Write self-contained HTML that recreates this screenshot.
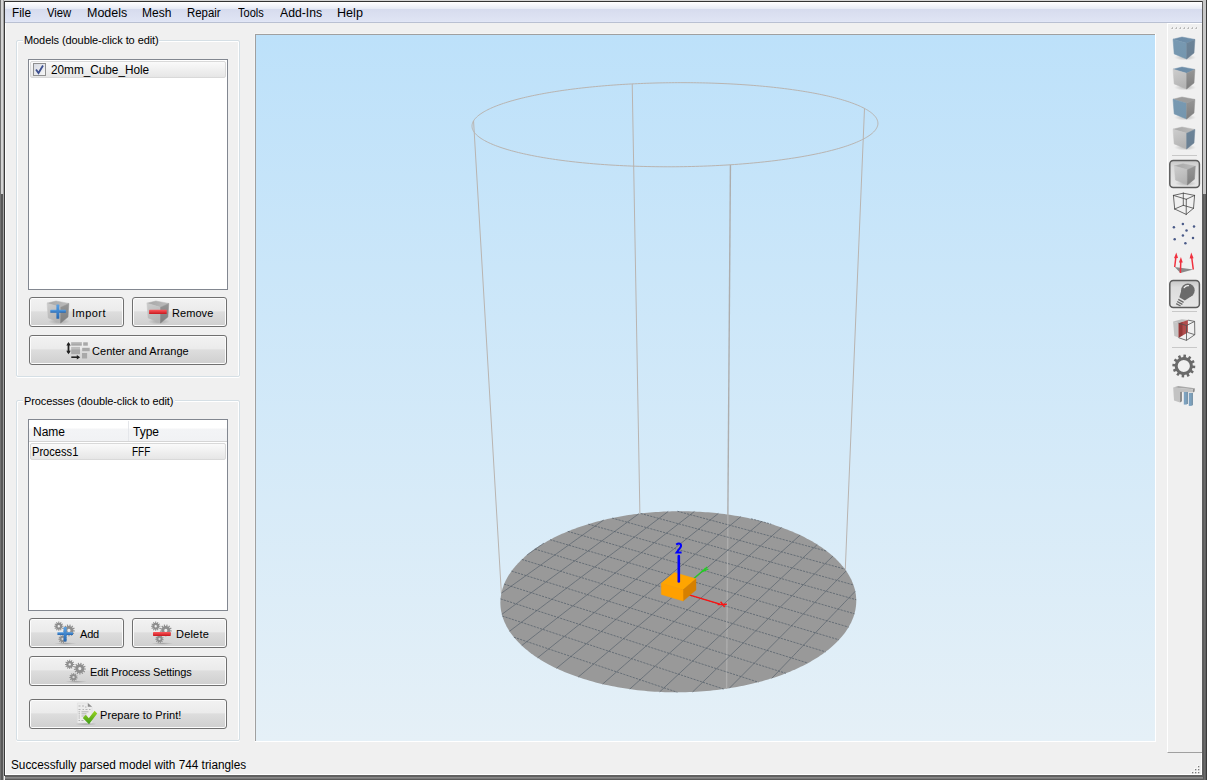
<!DOCTYPE html>
<html><head><meta charset="utf-8">
<style>
*{margin:0;padding:0;box-sizing:border-box}
html,body{width:1207px;height:780px;overflow:hidden;background:#f0f0f0;font-family:"Liberation Sans",sans-serif;font-size:12px;color:#000}
.a{position:absolute}
.t{position:absolute;white-space:nowrap;line-height:14px;transform-origin:0 0}
.menu{left:5px;top:2px;width:1197px;height:21px;background:linear-gradient(#ffffff 0px,#f1f3f9 4px,#e6eaf5 7px,#d5dbee 7px,#d8ddef 9px,#dfe4f4 19px,#e3e8f8 20px);border-bottom:1px solid #b9c0d2}
.grp{border:1px solid #d5dfe5;border-radius:2px;box-shadow:inset 1px 1px 0 #fff, inset -1px 0 0 #fff, 0 1px 0 #fff}
.lst{background:#fff;border:1px solid #828790}
.btn{border:1px solid #707070;border-radius:3px;background:linear-gradient(#f2f2f2 0%,#ebebeb 45%,#dddddd 50%,#cfcfcf 100%);box-shadow:inset 0 0 0 1px #fcfcfc}
.sel{border:1px solid #d9d9d9;border-radius:2px;background:linear-gradient(#fafafa,#e6e6e6)}
.sep{height:1px;background:#c9c9c9}
.tbsel{border:1px solid #5a5a5a;border-radius:4px;background:linear-gradient(#e8e8e8,#d8d8d8)}
</style></head><body>
<!-- window frame -->
<div class="a" style="left:5px;top:23px;width:1px;height:751px;background:#fff"></div>
<div class="a" style="left:5px;top:774px;width:1197px;height:1px;background:#fff"></div>
<div class="a" style="left:1201px;top:23px;width:1px;height:752px;background:#fff"></div>
<div class="a" style="left:0;top:0;width:1207px;height:1px;background:#d4d4d4"></div>
<div class="a" style="left:0;top:1px;width:1207px;height:1px;background:#333"></div>
<div class="a" style="left:0;top:0;width:1px;height:780px;background:#727272"></div>
<div class="a" style="left:1px;top:0;width:2px;height:194px;background:#d4d4d4"></div>
<div class="a" style="left:1px;top:194px;width:2px;height:586px;background:#585858"></div>
<div class="a" style="left:3px;top:0;width:1px;height:780px;background:#a3a3a3"></div>
<div class="a" style="left:4px;top:1px;width:1px;height:775px;background:#3a3a3a"></div>
<div class="a" style="left:1202px;top:1px;width:1px;height:779px;background:#5e5e5e"></div>
<div class="a" style="left:1203px;top:0;width:3px;height:194px;background:#c8c8c8"></div>
<div class="a" style="left:1203px;top:194px;width:1px;height:586px;background:#5c5c5c"></div>
<div class="a" style="left:1204px;top:194px;width:1px;height:586px;background:#6a6a6a"></div>
<div class="a" style="left:1205px;top:194px;width:1px;height:586px;background:#606060"></div>
<div class="a" style="left:1206px;top:0;width:1px;height:780px;background:#3a3a3a"></div>
<div class="a" style="left:5px;top:775px;width:1198px;height:2px;background:#606060"></div>
<div class="a" style="left:5px;top:777px;width:1198px;height:1px;background:#8a8a8a"></div>
<div class="a" style="left:5px;top:778px;width:1198px;height:1px;background:#7a7a7a"></div>
<div class="a" style="left:5px;top:779px;width:1198px;height:1px;background:#5a5a5a"></div>
<!-- menu -->
<div class="a menu"></div>
<div class="t" style="left:12px;top:6px;transform:scaleX(.98)">File</div>
<div class="t" style="left:47px;top:6px;transform:scaleX(.94)">View</div>
<div class="t" style="left:87px;top:6px;transform:scaleX(1.04)">Models</div>
<div class="t" style="left:142px;top:6px">Mesh</div>
<div class="t" style="left:187px;top:6px;transform:scaleX(.95)">Repair</div>
<div class="t" style="left:238px;top:6px;transform:scaleX(.92)">Tools</div>
<div class="t" style="left:280px;top:6px;transform:scaleX(1.02)">Add-Ins</div>
<div class="t" style="left:337px;top:6px;transform:scaleX(1.05)">Help</div>

<!-- Models group -->
<div class="a grp" style="left:16px;top:40px;width:224px;height:337px"></div>
<div class="a" style="left:23px;top:34px;width:136px;height:14px;background:#f0f0f0"></div>
<div class="t" style="left:24px;top:33px;font-size:11px;letter-spacing:-0.08px">Models (double-click to edit)</div>
<div class="a lst" style="left:28px;top:59px;width:200px;height:231px"></div>
<div class="a sel" style="left:30px;top:61px;width:196px;height:17px"></div>
<div class="a" style="left:33px;top:63px;width:13px;height:13px;border:1px solid #8f8f8f;background:linear-gradient(135deg,#d8dbe3,#f6f6f6)"></div>
<svg class="a" style="left:33px;top:63px" width="13" height="13"><path d="M3 6.5 L5.5 10 L10 2.5" stroke="#3d4f8f" stroke-width="1.8" fill="none"/></svg>
<div class="t" style="left:51px;top:63px;transform:scaleX(.981)">20mm_Cube_Hole</div>

<div class="a btn" style="left:29px;top:297px;width:95px;height:30px"></div>
<div class="t" style="left:72px;top:306px;font-size:11px;letter-spacing:0.46px">Import</div>
<div class="a btn" style="left:132px;top:297px;width:95px;height:30px"></div>
<div class="t" style="left:172px;top:306px;font-size:11px;letter-spacing:0.06px">Remove</div>
<div class="a btn" style="left:29px;top:335px;width:198px;height:30px"></div>
<div class="t" style="left:92px;top:344px;font-size:11px;letter-spacing:0.04px">Center and Arrange</div>

<!-- Processes group -->
<div class="a grp" style="left:16px;top:400px;width:224px;height:341px"></div>
<div class="a" style="left:23px;top:394px;width:152px;height:14px;background:#f0f0f0"></div>
<div class="t" style="left:24px;top:394px;font-size:11px;letter-spacing:-0.11px">Processes (double-click to edit)</div>
<div class="a lst" style="left:28px;top:419px;width:200px;height:192px"></div>
<div class="a" style="left:29px;top:420px;width:198px;height:22px;background:linear-gradient(#ffffff 0%,#ffffff 40%,#f3f4f6 41%,#f1f2f4 100%);border-bottom:1px solid #d5d5d5"></div>
<div class="a" style="left:128px;top:421px;width:1px;height:20px;background:#e4e6ea"></div>
<div class="t" style="left:33px;top:425px">Name</div>
<div class="t" style="left:133px;top:425px">Type</div>
<div class="a sel" style="left:30px;top:443px;width:196px;height:17px"></div>
<div class="t" style="left:32px;top:445px;transform:scaleX(.927)">Process1</div>
<div class="t" style="left:132px;top:445px;transform:scaleX(.83)">FFF</div>

<div class="a btn" style="left:29px;top:618px;width:95px;height:30px"></div>
<div class="t" style="left:80px;top:627px;font-size:11px;letter-spacing:-0.2px">Add</div>
<div class="a btn" style="left:132px;top:618px;width:95px;height:30px"></div>
<div class="t" style="left:176px;top:627px;font-size:11px;letter-spacing:0.2px">Delete</div>
<div class="a btn" style="left:29px;top:656px;width:198px;height:30px"></div>
<div class="t" style="left:90px;top:665px;font-size:11px;letter-spacing:-0.14px">Edit Process Settings</div>
<div class="a btn" style="left:29px;top:699px;width:198px;height:30px"></div>
<div class="t" style="left:100px;top:708px;font-size:11px;letter-spacing:0.08px">Prepare to Print!</div>

<!-- status -->
<div class="t" style="left:11px;top:758px;transform:scaleX(.982)">Successfully parsed model with 744 triangles</div>

<!-- viewport -->
<div class="a" style="left:254px;top:33px;width:902px;height:709px;background:#fff;border-left:1px solid #f4f4f4;border-top:1px solid #f4f4f4"></div>
<div class="a" style="left:255px;top:34px;width:900px;height:707px;border-top:1px solid #a0a0a0;border-left:1px solid #a0a0a0;background:#d0e8f8"></div>
<svg class="a" style="left:0;top:0" width="1207" height="780" viewBox="0 0 1207 780"><defs><linearGradient id="bg" x1="0" y1="0" x2="0" y2="1"><stop offset="0" stop-color="#bde1fa"/><stop offset="1" stop-color="#e5f0f7"/></linearGradient></defs>
<rect x="256" y="35" width="899" height="706" fill="url(#bg)"/>
<path d="M473.55 120.90 L501.37 593.15" stroke="#b9b4b0" stroke-width="1" fill="none"/>
<path d="M632.22 83.91 L639.89 513.56" stroke="#b9b4b0" stroke-width="1" fill="none"/>
<path d="M864.50 108.42 L845.28 569.61" stroke="#b9b4b0" stroke-width="1" fill="none"/>
<path d="M855.05 590.35 L854.66 588.79 L854.23 587.24 L853.74 585.70 L853.20 584.17 L852.61 582.65 L851.97 581.13 L851.28 579.62 L850.54 578.13 L849.76 576.64 L848.92 575.16 L848.04 573.69 L847.11 572.24 L846.13 570.79 L845.11 569.36 L844.04 567.94 L842.92 566.53 L841.76 565.13 L840.56 563.75 L839.32 562.38 L838.03 561.02 L836.70 559.68 L835.32 558.35 L833.91 557.03 L832.46 555.73 L830.96 554.45 L829.43 553.17 L827.86 551.92 L826.25 550.68 L824.60 549.46 L822.91 548.25 L821.19 547.06 L819.44 545.88 L817.65 544.73 L815.82 543.58 L813.96 542.46 L812.07 541.36 L810.14 540.27 L808.19 539.20 L806.20 538.14 L804.18 537.11 L802.13 536.09 L800.05 535.10 L797.94 534.12 L795.81 533.16 L793.65 532.22 L791.46 531.29 L789.24 530.39 L787.00 529.51 L784.73 528.64 L782.44 527.80 L780.12 526.98 L777.78 526.17 L775.42 525.39 L773.04 524.62 L770.63 523.88 L768.21 523.16 L765.76 522.45 L763.29 521.77 L760.81 521.11 L758.31 520.47 L755.79 519.85 L753.25 519.25 L750.69 518.67 L748.12 518.12 L745.54 517.58 L742.94 517.07 L740.32 516.57 L737.70 516.10 L735.06 515.65 L732.40 515.22 L729.74 514.82 L727.06 514.43 L724.38 514.07 L721.68 513.72 L718.97 513.40 L716.26 513.11 L713.54 512.83 L710.81 512.57 L708.07 512.34 L705.33 512.13 L702.58 511.94 L699.82 511.77 L697.07 511.63 L694.30 511.50 L691.54 511.40 L688.77 511.32 L686.00 511.26 L683.23 511.23 L680.45 511.22 L677.68 511.22 L674.90 511.25 L672.13 511.31 L669.36 511.38 L666.59 511.48 L663.82 511.60 L661.06 511.74 L658.30 511.90 L655.54 512.08 L652.79 512.29 L650.04 512.52 L647.30 512.77 L644.57 513.04 L641.84 513.33 L639.13 513.65 L636.42 513.98 L633.72 514.34 L631.02 514.72 L628.34 515.12 L625.67 515.55 L623.02 515.99 L620.37 516.46 L617.73 516.95 L615.11 517.45 L612.51 517.98 L609.91 518.53 L607.34 519.11 L604.77 519.70 L602.23 520.31 L599.70 520.95 L597.19 521.60 L594.69 522.28 L592.22 522.97 L589.76 523.69 L587.33 524.43 L584.91 525.19 L582.52 525.96 L580.14 526.76 L577.79 527.58 L575.47 528.41 L573.16 529.27 L570.88 530.15 L568.63 531.04 L566.40 531.96 L564.19 532.89 L562.02 533.84 L559.87 534.82 L557.75 535.81 L555.65 536.81 L553.59 537.84 L551.55 538.89 L549.55 539.95 L547.58 541.03 L545.63 542.13 L543.72 543.24 L541.85 544.38 L540.00 545.52 L538.19 546.69 L536.42 547.87 L534.68 549.07 L532.98 550.29 L531.31 551.52 L529.68 552.77 L528.09 554.03 L526.53 555.31 L525.02 556.60 L523.54 557.90 L522.11 559.22 L520.71 560.56 L519.36 561.91 L518.05 563.27 L516.78 564.65 L515.55 566.03 L514.37 567.43 L513.23 568.85 L512.13 570.27 L511.08 571.71 L510.08 573.16 L509.12 574.62 L508.21 576.08 L507.35 577.56 L506.54 579.05 L505.77 580.55 L505.05 582.06 L504.38 583.58 L503.77 585.10 L503.20 586.63 L502.68 588.17 L502.22 589.72 L501.80 591.27 L501.44 592.83 L501.13 594.40 L500.87 595.97 L500.67 597.54 L500.52 599.12 L500.43 600.71 L500.38 602.30 L500.40 603.89 L500.47 605.48 L500.59 607.07 L500.77 608.67 L501.01 610.27 L501.30 611.87 L501.65 613.46 L502.05 615.06 L502.51 616.66 L503.03 618.25 L503.61 619.84 L504.24 621.43 L504.93 623.02 L505.68 624.60 L506.49 626.18 L507.35 627.75 L508.28 629.32 L509.25 630.88 L510.29 632.44 L511.39 633.99 L512.54 635.52 L513.75 637.06 L515.02 638.58 L516.34 640.09 L517.72 641.59 L519.16 643.08 L520.66 644.56 L522.21 646.03 L523.82 647.49 L525.48 648.93 L527.20 650.36 L528.98 651.77 L530.81 653.17 L532.69 654.55 L534.63 655.92 L536.62 657.27 L538.67 658.60 L540.76 659.92 L542.91 661.22 L545.11 662.49 L547.36 663.75 L549.67 664.99 L552.02 666.20 L554.42 667.40 L556.86 668.57 L559.36 669.72 L561.90 670.85 L564.48 671.95 L567.12 673.03 L569.79 674.09 L572.51 675.12 L575.27 676.12 L578.07 677.10 L580.91 678.05 L583.79 678.97 L586.71 679.87 L589.67 680.74 L592.66 681.58 L595.68 682.39 L598.74 683.17 L601.83 683.92 L604.96 684.64 L608.11 685.33 L611.29 685.99 L614.50 686.62 L617.74 687.22 L621.00 687.78 L624.28 688.32 L627.59 688.82 L630.92 689.29 L634.27 689.72 L637.63 690.13 L641.02 690.49 L644.42 690.83 L647.83 691.13 L651.26 691.40 L654.69 691.63 L658.14 691.83 L661.60 692.00 L665.06 692.13 L668.53 692.23 L672.00 692.29 L675.47 692.31 L678.95 692.31 L682.43 692.27 L685.90 692.19 L689.37 692.08 L692.84 691.93 L696.30 691.75 L699.75 691.54 L703.20 691.29 L706.63 691.01 L710.05 690.69 L713.46 690.34 L716.86 689.96 L720.23 689.54 L723.59 689.09 L726.94 688.61 L730.26 688.10 L733.56 687.55 L736.83 686.97 L740.09 686.36 L743.31 685.71 L746.52 685.04 L749.69 684.34 L752.83 683.60 L755.94 682.83 L759.02 682.04 L762.07 681.22 L765.09 680.36 L768.07 679.48 L771.01 678.57 L773.91 677.63 L776.78 676.67 L779.61 675.68 L782.40 674.66 L785.14 673.62 L787.84 672.55 L790.50 671.46 L793.12 670.34 L795.69 669.20 L798.22 668.04 L800.69 666.86 L803.12 665.65 L805.51 664.42 L807.84 663.17 L810.12 661.90 L812.36 660.61 L814.54 659.31 L816.67 657.98 L818.75 656.63 L820.77 655.27 L822.75 653.90 L824.67 652.50 L826.53 651.09 L828.34 649.67 L830.09 648.23 L831.79 646.78 L833.44 645.31 L835.03 643.83 L836.56 642.34 L838.03 640.84 L839.45 639.33 L840.81 637.81 L842.11 636.28 L843.36 634.74 L844.55 633.19 L845.68 631.63 L846.75 630.07 L847.77 628.50 L848.72 626.93 L849.62 625.35 L850.47 623.76 L851.25 622.17 L851.98 620.58 L852.65 618.98 L853.26 617.39 L853.81 615.78 L854.31 614.18 L854.75 612.58 L855.13 610.98 L855.46 609.38 L855.72 607.77 L855.94 606.17 L856.10 604.57 L856.20 602.98 L856.24 601.38 L856.24 599.79 L856.17 598.21 L856.05 596.62 L855.88 595.05 L855.66 593.47 L855.38 591.91 Z" fill="#999999"/>
<path d="M730.44 164.78 L726.59 688.66" stroke="#adadad" stroke-width="1.4" fill="none"/>
<path d="M526.84 555.05 L527.44 554.63 L528.05 554.21 L528.65 553.79 L529.25 553.37 L529.84 552.95 L530.44 552.54 L531.04 552.12 L531.64 551.70 L532.23 551.29 L532.83 550.87 L533.42 550.46 L534.02 550.04 L534.61 549.63 L535.21 549.21 L535.80 548.80 L536.39 548.39 L536.98 547.98 L537.57 547.56 L538.16 547.15 L538.75 546.74 L539.34 546.33 L539.93 545.92 L540.52 545.51 L541.10 545.10 L541.69 544.69 L542.27 544.29 L542.86 543.88 L543.44 543.47 L544.03 543.06 M501.36 593.21 L505.23 590.44 L509.08 587.69 L512.90 584.95 L516.69 582.24 L520.46 579.54 L524.20 576.87 L527.91 574.21 L531.60 571.57 L535.27 568.94 L538.91 566.34 L542.53 563.75 L546.12 561.18 L549.69 558.62 L553.24 556.09 L556.76 553.57 L560.26 551.06 L563.74 548.57 L567.19 546.10 L570.62 543.65 L574.03 541.21 L577.42 538.78 L580.79 536.38 L584.13 533.98 L587.45 531.61 L590.76 529.24 L594.04 526.90 L597.30 524.56 L600.54 522.25 L603.75 519.94 M501.86 614.33 L507.22 610.40 L512.52 606.50 L517.77 602.64 L522.98 598.82 L528.14 595.03 L533.24 591.28 L538.30 587.56 L543.32 583.87 L548.29 580.22 L553.21 576.61 L558.09 573.02 L562.92 569.47 L567.71 565.95 L572.46 562.47 L577.16 559.01 L581.82 555.59 L586.44 552.19 L591.03 548.83 L595.57 545.49 L600.07 542.18 L604.53 538.91 L608.95 535.66 L613.33 532.44 L617.68 529.24 L621.99 526.08 L626.26 522.94 L630.50 519.83 L634.70 516.74 L638.87 513.68 M509.49 631.25 L515.84 626.45 L522.11 621.72 L528.32 617.04 L534.45 612.41 L540.52 607.83 L546.51 603.30 L552.45 598.82 L558.32 594.39 L564.12 590.01 L569.86 585.68 L575.54 581.39 L581.16 577.15 L586.72 572.95 L592.22 568.80 L597.66 564.69 L603.04 560.63 L608.37 556.60 L613.64 552.62 L618.86 548.69 L624.03 544.79 L629.14 540.93 L634.20 537.11 L639.21 533.33 L644.17 529.58 L649.08 525.88 L653.94 522.21 L658.75 518.58 L663.52 514.98 L668.23 511.42 M521.71 645.57 L528.73 640.12 L535.65 634.74 L542.50 629.43 L549.25 624.19 L555.92 619.01 L562.51 613.90 L569.02 608.84 L575.45 603.85 L581.80 598.92 L588.08 594.05 L594.27 589.24 L600.40 584.49 L606.45 579.79 L612.44 575.14 L618.35 570.55 L624.19 566.02 L629.97 561.54 L635.68 557.10 L641.33 552.72 L646.91 548.39 L652.42 544.11 L657.88 539.87 L663.27 535.68 L668.61 531.54 L673.89 527.45 L679.10 523.40 L684.27 519.39 L689.37 515.43 L694.42 511.51 M537.52 657.87 L544.95 651.93 L552.29 646.07 L559.52 640.29 L566.66 634.59 L573.70 628.97 L580.65 623.42 L587.50 617.94 L594.27 612.53 L600.95 607.20 L607.54 601.93 L614.05 596.73 L620.48 591.60 L626.83 586.53 L633.09 581.52 L639.28 576.58 L645.39 571.70 L651.42 566.88 L657.39 562.12 L663.27 557.41 L669.09 552.77 L674.84 548.18 L680.52 543.64 L686.13 539.16 L691.67 534.73 L697.15 530.35 L702.57 526.02 L707.92 521.75 L713.21 517.52 L718.44 513.34 M556.43 668.37 L564.06 662.09 L571.58 655.90 L579.00 649.80 L586.31 643.78 L593.52 637.85 L600.63 632.00 L607.64 626.23 L614.56 620.54 L621.38 614.92 L628.12 609.38 L634.76 603.92 L641.32 598.53 L647.78 593.20 L654.17 587.95 L660.47 582.77 L666.69 577.65 L672.83 572.60 L678.89 567.61 L684.88 562.68 L690.79 557.82 L696.62 553.02 L702.39 548.28 L708.08 543.59 L713.70 538.97 L719.26 534.40 L724.74 529.88 L730.16 525.42 L735.52 521.02 L740.81 516.66 M578.17 677.13 L585.79 670.66 L593.31 664.29 L600.71 658.01 L608.01 651.82 L615.21 645.71 L622.31 639.69 L629.30 633.76 L636.20 627.91 L643.01 622.14 L649.72 616.44 L656.34 610.83 L662.87 605.29 L669.31 599.82 L675.67 594.43 L681.94 589.11 L688.13 583.86 L694.24 578.67 L700.27 573.56 L706.23 568.51 L712.10 563.52 L717.91 558.60 L723.64 553.74 L729.29 548.94 L734.88 544.20 L740.40 539.52 L745.85 534.90 L751.23 530.34 L756.55 525.83 L761.80 521.37 M602.62 684.10 L610.04 677.60 L617.36 671.20 L624.57 664.88 L631.68 658.66 L638.69 652.52 L645.60 646.47 L652.42 640.51 L659.14 634.62 L665.77 628.82 L672.31 623.10 L678.76 617.45 L685.12 611.88 L691.40 606.38 L697.60 600.96 L703.71 595.61 L709.74 590.33 L715.70 585.12 L721.57 579.97 L727.38 574.89 L733.10 569.88 L738.76 564.93 L744.34 560.04 L749.86 555.21 L755.30 550.45 L760.68 545.74 L765.99 541.09 L771.24 536.50 L776.42 531.96 L781.54 527.48 M629.74 689.13 L636.78 682.76 L643.72 676.49 L650.56 670.30 L657.30 664.20 L663.96 658.19 L670.52 652.25 L676.99 646.40 L683.38 640.62 L689.68 634.93 L695.90 629.30 L702.03 623.76 L708.08 618.28 L714.06 612.88 L719.96 607.55 L725.78 602.28 L731.53 597.08 L737.20 591.95 L742.80 586.89 L748.34 581.88 L753.80 576.94 L759.20 572.06 L764.53 567.24 L769.79 562.48 L774.99 557.78 L780.13 553.14 L785.20 548.55 L790.22 544.01 L795.17 539.53 L800.07 535.10 M659.65 691.91 L666.10 685.87 L672.47 679.92 L678.75 674.04 L684.95 668.24 L691.07 662.52 L697.11 656.87 L703.08 651.29 L708.97 645.79 L714.78 640.35 L720.52 634.98 L726.18 629.68 L731.78 624.45 L737.31 619.28 L742.77 614.17 L748.16 609.13 L753.49 604.15 L758.75 599.23 L763.95 594.36 L769.09 589.56 L774.16 584.81 L779.18 580.12 L784.14 575.48 L789.04 570.90 L793.88 566.37 L798.67 561.90 L803.40 557.47 L808.08 553.10 L812.71 548.77 L817.28 544.49 M692.61 691.94 L698.27 686.46 L703.86 681.05 L709.38 675.70 L714.84 670.42 L720.24 665.19 L725.57 660.03 L730.83 654.93 L736.04 649.89 L741.19 644.91 L746.27 639.98 L751.30 635.11 L756.27 630.30 L761.19 625.54 L766.05 620.83 L770.85 616.18 L775.60 611.58 L780.30 607.03 L784.95 602.53 L789.55 598.08 L794.09 593.68 L798.59 589.32 L803.04 585.01 L807.44 580.75 L811.79 576.54 L816.10 572.37 L820.37 568.24 L824.58 564.15 L828.76 560.11 L832.89 556.11 M729.31 688.25 L733.92 683.62 L738.49 679.03 L743.01 674.50 L747.48 670.01 L751.91 665.56 L756.29 661.16 L760.63 656.81 L764.92 652.50 L769.18 648.23 L773.39 644.00 L777.56 639.81 L781.69 635.67 L785.78 631.56 L789.83 627.49 L793.84 623.47 L797.81 619.48 L801.75 615.53 L805.65 611.62 L809.51 607.74 L813.33 603.90 L817.12 600.10 L820.87 596.33 L824.59 592.60 L828.28 588.90 L831.93 585.23 L835.55 581.60 L839.13 578.00 L842.68 574.44 L846.20 570.90 M771.71 678.35 L774.89 675.03 L778.05 671.74 L781.18 668.48 L784.29 665.23 L787.38 662.01 L790.45 658.82 L793.49 655.65 L796.51 652.50 L799.51 649.37 L802.49 646.27 L805.45 643.19 L808.38 640.13 L811.30 637.09 L814.19 634.07 L817.06 631.08 L819.92 628.11 L822.75 625.15 L825.56 622.22 L828.36 619.31 L831.13 616.42 L833.89 613.55 L836.62 610.70 L839.34 607.87 L842.04 605.06 L844.71 602.26 L847.38 599.49 L850.02 596.73 L852.64 594.00 L855.25 591.28" stroke="#56606b" stroke-width="0.8" fill="none" stroke-opacity="0.85"/>
<path d="M513.87 637.21 L519.17 638.99 L524.49 640.79 L529.83 642.59 L535.19 644.39 L540.58 646.21 L545.99 648.04 L551.43 649.87 L556.88 651.71 L562.37 653.56 L567.87 655.41 L573.41 657.28 L578.96 659.15 L584.54 661.03 L590.15 662.92 L595.78 664.82 L601.44 666.73 L607.12 668.64 L612.83 670.57 L618.56 672.50 L624.32 674.44 L630.10 676.39 L635.92 678.35 L641.75 680.32 L647.62 682.29 L653.51 684.28 L659.43 686.27 L665.37 688.28 L671.35 690.29 L677.35 692.32 M502.33 616.04 L509.34 618.35 L516.40 620.68 L523.50 623.02 L530.64 625.38 L537.82 627.75 L545.04 630.13 L552.30 632.53 L559.61 634.94 L566.96 637.37 L574.36 639.81 L581.80 642.26 L589.28 644.73 L596.81 647.21 L604.38 649.71 L612.00 652.23 L619.66 654.76 L627.37 657.30 L635.13 659.86 L642.94 662.44 L650.79 665.03 L658.69 667.64 L666.64 670.26 L674.64 672.90 L682.69 675.55 L690.78 678.23 L698.93 680.91 L707.13 683.62 L715.38 686.34 L723.68 689.08 M500.54 598.88 L508.60 601.49 L516.72 604.11 L524.89 606.75 L533.12 609.41 L541.40 612.09 L549.74 614.78 L558.14 617.50 L566.59 620.23 L575.10 622.98 L583.67 625.75 L592.29 628.53 L600.98 631.34 L609.73 634.17 L618.53 637.01 L627.40 639.88 L636.33 642.77 L645.33 645.67 L654.38 648.60 L663.50 651.55 L672.69 654.51 L681.94 657.50 L691.26 660.51 L700.64 663.55 L710.09 666.60 L719.61 669.68 L729.20 672.78 L738.86 675.90 L748.59 679.04 L758.39 682.21 M504.16 584.12 L512.90 586.89 L521.70 589.67 L530.56 592.48 L539.49 595.31 L548.48 598.15 L557.54 601.02 L566.67 603.91 L575.86 606.82 L585.13 609.75 L594.46 612.71 L603.86 615.68 L613.33 618.68 L622.87 621.70 L632.48 624.75 L642.17 627.81 L651.93 630.90 L661.76 634.02 L671.67 637.15 L681.66 640.32 L691.72 643.50 L701.86 646.71 L712.08 649.95 L722.38 653.21 L732.76 656.50 L743.22 659.81 L753.77 663.15 L764.40 666.51 L775.11 669.90 L785.91 673.32 M511.53 571.09 L520.68 573.93 L529.89 576.79 L539.18 579.68 L548.54 582.58 L557.97 585.50 L567.47 588.45 L577.04 591.42 L586.69 594.42 L596.42 597.44 L606.21 600.48 L616.09 603.54 L626.04 606.63 L636.07 609.74 L646.18 612.88 L656.37 616.04 L666.64 619.23 L676.99 622.44 L687.43 625.68 L697.95 628.94 L708.55 632.23 L719.24 635.55 L730.02 638.89 L740.88 642.26 L751.84 645.66 L762.89 649.09 L774.02 652.55 L785.25 656.03 L796.57 659.55 L807.99 663.09 M521.85 559.46 L531.20 562.31 L540.63 565.18 L550.12 568.06 L559.69 570.98 L569.34 573.91 L579.06 576.87 L588.85 579.85 L598.72 582.85 L608.67 585.88 L618.70 588.93 L628.81 592.00 L638.99 595.10 L649.26 598.23 L659.62 601.38 L670.05 604.55 L680.57 607.75 L691.18 610.98 L701.87 614.23 L712.65 617.51 L723.52 620.82 L734.48 624.15 L745.53 627.52 L756.67 630.91 L767.91 634.33 L779.24 637.77 L790.66 641.25 L802.19 644.75 L813.81 648.29 L825.53 651.86 M534.74 549.03 L544.11 551.83 L553.56 554.65 L563.07 557.49 L572.66 560.35 L582.33 563.23 L592.07 566.14 L601.88 569.07 L611.78 572.02 L621.75 574.99 L631.80 577.99 L641.92 581.02 L652.13 584.06 L662.42 587.13 L672.79 590.23 L683.25 593.35 L693.79 596.49 L704.42 599.66 L715.13 602.86 L725.93 606.08 L736.82 609.33 L747.80 612.61 L758.87 615.91 L770.03 619.24 L781.28 622.60 L792.63 625.99 L804.08 629.40 L815.62 632.85 L827.26 636.32 L838.99 639.82 M550.04 539.68 L559.26 542.38 L568.55 545.11 L577.91 547.85 L587.35 550.61 L596.85 553.39 L606.42 556.19 L616.07 559.02 L625.79 561.86 L635.59 564.73 L645.46 567.62 L655.41 570.54 L665.43 573.47 L675.54 576.43 L685.72 579.41 L695.98 582.42 L706.33 585.44 L716.75 588.50 L727.26 591.57 L737.85 594.68 L748.53 597.80 L759.29 600.95 L770.14 604.13 L781.08 607.33 L792.11 610.56 L803.22 613.82 L814.43 617.10 L825.73 620.41 L837.13 623.74 L848.62 627.11 M567.80 531.38 L576.70 533.94 L585.66 536.51 L594.68 539.10 L603.77 541.72 L612.93 544.35 L622.15 547.00 L631.44 549.67 L640.80 552.36 L650.22 555.07 L659.72 557.79 L669.28 560.54 L678.92 563.31 L688.63 566.10 L698.41 568.91 L708.27 571.75 L718.19 574.60 L728.20 577.47 L738.28 580.37 L748.44 583.29 L758.67 586.23 L768.98 589.20 L779.38 592.18 L789.85 595.19 L800.40 598.23 L811.04 601.28 L821.76 604.36 L832.57 607.47 L843.45 610.60 L854.43 613.75 M588.29 524.13 L596.67 526.50 L605.10 528.88 L613.59 531.27 L622.14 533.68 L630.74 536.11 L639.41 538.56 L648.13 541.02 L656.91 543.50 L665.75 545.99 L674.66 548.50 L683.62 551.03 L692.65 553.58 L701.73 556.14 L710.89 558.73 L720.10 561.33 L729.38 563.94 L738.73 566.58 L748.14 569.24 L757.62 571.91 L767.16 574.61 L776.78 577.32 L786.46 580.05 L796.21 582.80 L806.04 585.57 L815.93 588.37 L825.90 591.18 L835.94 594.01 L846.05 596.86 L856.23 599.74 M612.13 518.06 L619.75 520.18 L627.42 522.30 L635.13 524.44 L642.89 526.59 L650.70 528.75 L658.56 530.93 L666.46 533.12 L674.42 535.33 L682.42 537.54 L690.47 539.77 L698.57 542.02 L706.72 544.28 L714.93 546.55 L723.18 548.84 L731.49 551.14 L739.84 553.46 L748.25 555.79 L756.72 558.13 L765.24 560.49 L773.81 562.87 L782.43 565.26 L791.11 567.66 L799.85 570.09 L808.65 572.52 L817.50 574.98 L826.41 577.44 L835.37 579.93 L844.40 582.43 L853.48 584.95 M640.64 513.47 L647.18 515.25 L653.76 517.04 L660.36 518.84 L667.01 520.65 L673.68 522.47 L680.39 524.29 L687.14 526.13 L693.92 527.97 L700.73 529.83 L707.59 531.70 L714.47 533.57 L721.40 535.45 L728.35 537.35 L735.35 539.25 L742.38 541.17 L749.45 543.09 L756.56 545.03 L763.71 546.97 L770.89 548.93 L778.11 550.90 L785.38 552.87 L792.68 554.86 L800.02 556.86 L807.39 558.87 L814.81 560.89 L822.27 562.92 L829.77 564.96 L837.32 567.01 L844.90 569.08 M677.39 511.23 L682.28 512.53 L687.18 513.85 L692.11 515.16 L697.05 516.49 L702.01 517.81 L707.00 519.15 L712.00 520.48 L717.01 521.83 L722.05 523.18 L727.11 524.53 L732.18 525.89 L737.28 527.25 L742.40 528.62 L747.53 529.99 L752.69 531.37 L757.86 532.76 L763.06 534.15 L768.27 535.54 L773.51 536.94 L778.76 538.35 L784.04 539.76 L789.33 541.18 L794.65 542.60 L799.99 544.03 L805.35 545.46 L810.73 546.90 L816.13 548.35 L821.55 549.80 L827.00 551.25 M750.94 518.73 L751.64 518.91 L752.34 519.09 L753.03 519.28 L753.73 519.46 L754.43 519.64 L755.12 519.83 L755.82 520.01 L756.52 520.19 L757.22 520.38 L757.92 520.56 L758.62 520.75 L759.32 520.93 L760.02 521.11 L760.72 521.30 L761.42 521.48 L762.12 521.67 L762.82 521.85 L763.52 522.04 L764.22 522.22 L764.93 522.41 L765.63 522.59 L766.33 522.78 L767.04 522.96 L767.74 523.15 L768.45 523.33 L769.15 523.52 L769.86 523.70 L770.56 523.89 L771.27 524.07" stroke="#56606b" stroke-width="0.9" fill="none" stroke-opacity="0.85" stroke-dasharray="2.2 1.1"/>
<path d="M689.12 594.83 L720.05 604.06" stroke="#ff1010" stroke-width="1.3" fill="none"/>
<path d="M684.70 586.12 L707.23 567.02" stroke="#20d020" stroke-width="1.2" fill="none"/>
<path transform="translate(0.5 0.6)" d="M660.73 582.77 L682.55 589.25 L695.50 578.26 L673.87 571.96 Z" fill="#ffa500" stroke="#ffa500" stroke-width="0.4"/>
<path transform="translate(0.5 0.6)" d="M682.62 600.43 L695.52 589.32 L695.50 578.26 L682.55 589.25 Z" fill="#d68000" stroke="#d68000" stroke-width="0.4"/>
<path transform="translate(0.5 0.6)" d="M660.87 593.87 L682.62 600.43 L682.55 589.25 L660.73 582.77 Z" fill="#ffa000" stroke="#ffa000" stroke-width="0.4"/>
<path d="M678.8 556 L678.8 581.5" stroke="#0000ff" stroke-width="2.6" stroke-linecap="round" fill="none"/>
<path d="M676.2 544.6 Q679 542.6 680.8 544.4 Q681.6 546.6 679.6 548.4 L676.6 552.6 L681.6 552.6" stroke="#0000ff" stroke-width="2" fill="none"/>
<path d="M717.6 604.6 L726.8 604.2 M720.6 601.8 L724.6 607" stroke="#ff1010" stroke-width="1.4" fill="none"/>
<path d="M702 571.6 L708.4 569 M704.6 568.6 L705.6 571" stroke="#20d020" stroke-width="1.2" fill="none"/>
<path d="M876.20 117.92 L875.72 117.21 L875.17 116.49 L874.57 115.78 L873.91 115.08 L873.20 114.38 L872.43 113.68 L871.60 112.99 L870.71 112.31 L869.78 111.63 L868.78 110.95 L867.74 110.28 L866.64 109.62 L865.49 108.96 L864.29 108.30 L863.04 107.66 L861.73 107.02 L860.38 106.38 L858.98 105.75 L857.53 105.13 L856.04 104.52 L854.49 103.91 L852.90 103.31 L851.27 102.71 L849.59 102.12 L847.87 101.54 L846.10 100.97 L844.29 100.41 L842.44 99.85 L840.55 99.30 L838.62 98.76 L836.64 98.22 L834.63 97.70 L832.58 97.18 L830.49 96.67 L828.37 96.16 L826.21 95.67 L824.01 95.19 L821.78 94.71 L819.52 94.24 L817.22 93.78 L814.89 93.33 L812.52 92.89 L810.13 92.45 L807.70 92.03 L805.25 91.61 L802.76 91.20 L800.25 90.81 L797.71 90.42 L795.14 90.04 L792.55 89.66 L789.93 89.30 L787.28 88.95 L784.61 88.61 L781.92 88.27 L779.20 87.95 L776.46 87.63 L773.70 87.33 L770.92 87.03 L768.12 86.74 L765.29 86.47 L762.45 86.20 L759.59 85.94 L756.72 85.69 L753.82 85.45 L750.91 85.22 L747.98 85.01 L745.04 84.80 L742.08 84.60 L739.11 84.41 L736.13 84.22 L733.13 84.05 L730.13 83.89 L727.11 83.74 L724.08 83.60 L721.04 83.47 L717.99 83.35 L714.93 83.24 L711.86 83.13 L708.79 83.04 L705.71 82.96 L702.62 82.89 L699.53 82.83 L696.43 82.77 L693.33 82.73 L690.22 82.70 L687.12 82.68 L684.00 82.66 L680.89 82.66 L677.78 82.67 L674.66 82.68 L671.55 82.71 L668.44 82.75 L665.32 82.79 L662.21 82.85 L659.11 82.92 L656.00 82.99 L652.90 83.08 L649.80 83.18 L646.71 83.28 L643.63 83.40 L640.55 83.52 L637.48 83.66 L634.41 83.80 L631.35 83.96 L628.31 84.12 L625.27 84.30 L622.24 84.48 L619.22 84.67 L616.22 84.88 L613.23 85.09 L610.24 85.31 L607.28 85.54 L604.32 85.79 L601.38 86.04 L598.46 86.30 L595.55 86.57 L592.66 86.85 L589.79 87.14 L586.93 87.43 L584.10 87.74 L581.28 88.06 L578.48 88.38 L575.70 88.72 L572.95 89.06 L570.21 89.42 L567.50 89.78 L564.81 90.15 L562.14 90.53 L559.50 90.92 L556.89 91.32 L554.30 91.73 L551.74 92.15 L549.20 92.57 L546.70 93.00 L544.22 93.45 L541.77 93.90 L539.35 94.36 L536.96 94.82 L534.60 95.30 L532.28 95.78 L529.99 96.28 L527.73 96.78 L525.50 97.28 L523.32 97.80 L521.16 98.33 L519.05 98.86 L516.97 99.40 L514.92 99.94 L512.92 100.50 L510.95 101.06 L509.03 101.63 L507.15 102.21 L505.30 102.79 L503.50 103.38 L501.74 103.98 L500.03 104.58 L498.36 105.19 L496.73 105.81 L495.15 106.43 L493.62 107.06 L492.13 107.70 L490.69 108.34 L489.30 108.99 L487.95 109.64 L486.66 110.30 L485.42 110.97 L484.23 111.64 L483.08 112.31 L482.00 112.99 L480.96 113.68 L479.98 114.37 L479.05 115.06 L478.18 115.76 L477.36 116.46 L476.60 117.17 L475.89 117.88 L475.24 118.59 L474.65 119.31 L474.12 120.03 L473.64 120.75 L473.23 121.48 L472.87 122.21 L472.58 122.94 L472.35 123.67 L472.17 124.41 L472.06 125.14 L472.01 125.88 L472.03 126.62 L472.11 127.36 L472.25 128.11 L472.45 128.85 L472.72 129.59 L473.06 130.33 L473.46 131.08 L473.92 131.82 L474.45 132.56 L475.05 133.30 L475.71 134.04 L476.43 134.78 L477.23 135.52 L478.09 136.25 L479.02 136.98 L480.01 137.71 L481.07 138.44 L482.20 139.17 L483.40 139.89 L484.66 140.60 L485.99 141.32 L487.39 142.03 L488.85 142.73 L490.38 143.43 L491.98 144.13 L493.64 144.82 L495.37 145.50 L497.16 146.18 L499.03 146.85 L500.95 147.52 L502.94 148.18 L505.00 148.83 L507.12 149.48 L509.30 150.11 L511.55 150.74 L513.86 151.36 L516.23 151.98 L518.66 152.58 L521.16 153.18 L523.71 153.76 L526.33 154.34 L529.00 154.90 L531.73 155.46 L534.52 156.01 L537.36 156.54 L540.26 157.06 L543.21 157.58 L546.22 158.08 L549.28 158.57 L552.39 159.04 L555.55 159.51 L558.76 159.96 L562.02 160.40 L565.33 160.83 L568.68 161.24 L572.08 161.64 L575.52 162.03 L579.00 162.40 L582.52 162.76 L586.08 163.10 L589.68 163.43 L593.31 163.75 L596.98 164.05 L600.68 164.33 L604.42 164.60 L608.19 164.86 L611.98 165.10 L615.80 165.32 L619.65 165.53 L623.52 165.72 L627.41 165.90 L631.33 166.06 L635.26 166.21 L639.21 166.33 L643.17 166.45 L647.15 166.54 L651.15 166.62 L655.15 166.68 L659.16 166.73 L663.18 166.76 L667.20 166.77 L671.23 166.77 L675.26 166.75 L679.28 166.71 L683.31 166.66 L687.33 166.59 L691.35 166.50 L695.36 166.40 L699.36 166.28 L703.35 166.15 L707.33 165.99 L711.29 165.83 L715.24 165.64 L719.17 165.44 L723.08 165.23 L726.97 165.00 L730.84 164.75 L734.68 164.49 L738.50 164.21 L742.29 163.92 L746.05 163.61 L749.78 163.29 L753.48 162.95 L757.15 162.60 L760.78 162.23 L764.37 161.85 L767.93 161.45 L771.44 161.05 L774.92 160.63 L778.35 160.19 L781.74 159.74 L785.09 159.28 L788.39 158.81 L791.64 158.32 L794.84 157.83 L798.00 157.32 L801.10 156.80 L804.15 156.26 L807.15 155.72 L810.10 155.17 L812.99 154.60 L815.83 154.03 L818.61 153.44 L821.33 152.85 L823.99 152.24 L826.60 151.63 L829.15 151.01 L831.63 150.38 L834.06 149.74 L836.42 149.10 L838.72 148.44 L840.96 147.78 L843.13 147.11 L845.24 146.44 L847.29 145.76 L849.27 145.07 L851.19 144.38 L853.04 143.68 L854.82 142.97 L856.54 142.27 L858.20 141.55 L859.78 140.83 L861.30 140.11 L862.76 139.39 L864.14 138.66 L865.46 137.93 L866.72 137.19 L867.90 136.45 L869.02 135.71 L870.07 134.97 L871.05 134.23 L871.97 133.48 L872.82 132.73 L873.61 131.99 L874.32 131.24 L874.97 130.49 L875.56 129.74 L876.08 128.99 L876.53 128.24 L876.92 127.49 L877.24 126.75 L877.50 126.00 L877.70 125.25 L877.83 124.51 L877.90 123.77 L877.90 123.03 L877.84 122.29 L877.72 121.56 L877.54 120.82 L877.29 120.09 L876.99 119.37 L876.62 118.64 Z" stroke="#b9b4b0" stroke-width="1" fill="none"/></svg>

<!-- toolbar -->
<div class="a" style="left:1167px;top:23px;width:35px;height:730px;border-left:1px solid #fff;border-top:1px solid #fff;border-bottom:1px solid #a0a0a0;background:#f0f0f0"></div>

<svg class="a" style="left:0;top:0" width="1207" height="780" viewBox="0 0 1207 780"><defs>
<linearGradient id="gTop" x1="0" y1="0" x2="1" y2="0"><stop offset="0" stop-color="#a6a6a6"/><stop offset="1" stop-color="#bcbcbc"/></linearGradient>
<linearGradient id="gFront" x1="0" y1="0" x2="0.3" y2="1"><stop offset="0" stop-color="#cdcdcd"/><stop offset="1" stop-color="#b4b4b4"/></linearGradient>
<linearGradient id="gRight" x1="0" y1="0" x2="0" y2="1"><stop offset="0" stop-color="#969696"/><stop offset="1" stop-color="#7e7e7e"/></linearGradient>
<linearGradient id="gBlueT" x1="0" y1="0" x2="1" y2="0"><stop offset="0" stop-color="#6a8aa6"/><stop offset="1" stop-color="#7090aa"/></linearGradient>
<linearGradient id="gBlueF" x1="0" y1="0" x2="0" y2="1"><stop offset="0" stop-color="#7899b2"/><stop offset="1" stop-color="#7496ae"/></linearGradient>
<linearGradient id="gBlueR" x1="0" y1="0" x2="0" y2="1"><stop offset="0" stop-color="#6c8498"/><stop offset="1" stop-color="#6a7f92"/></linearGradient>
<linearGradient id="gPlus" x1="0" y1="0" x2="0" y2="1"><stop offset="0" stop-color="#5aa2e6"/><stop offset="1" stop-color="#2566b0"/></linearGradient>
<linearGradient id="gMinus" x1="0" y1="0" x2="0" y2="1"><stop offset="0" stop-color="#ff5a5e"/><stop offset="1" stop-color="#c8181e"/></linearGradient>
<linearGradient id="gCheck" x1="0" y1="0" x2="0" y2="1"><stop offset="0" stop-color="#9ad420"/><stop offset="1" stop-color="#3c9a1a"/></linearGradient>
<linearGradient id="gSel" x1="0" y1="0" x2="0" y2="1"><stop offset="0" stop-color="#c6c6c6"/><stop offset="0.25" stop-color="#dcdcdc"/><stop offset="1" stop-color="#e6e6e6"/></linearGradient>
<radialGradient id="gShadow" cx="0.5" cy="0.5" r="0.5"><stop offset="0" stop-color="#000" stop-opacity="0.22"/><stop offset="1" stop-color="#000" stop-opacity="0"/></radialGradient>
</defs>
<ellipse cx="59.00" cy="321.50" rx="11.00" ry="3.00" fill="url(#gShadow)"/><polygon points="47.00,303.20 56.00,301.00 68.90,303.40 60.60,307.30" fill="url(#gTop)" stroke="url(#gTop)" stroke-width="0.5" stroke-linejoin="round"/><polygon points="47.00,303.20 60.60,307.30 60.60,323.00 48.20,317.90" fill="url(#gFront)" stroke="url(#gFront)" stroke-width="0.5" stroke-linejoin="round"/><polygon points="60.60,307.30 68.90,303.40 68.00,317.00 60.60,323.00" fill="url(#gRight)" stroke="url(#gRight)" stroke-width="0.5" stroke-linejoin="round"/>
<rect x="50.3" y="309.8" width="15.6" height="3" rx="0.6" fill="url(#gPlus)"/>
<rect x="56.4" y="304.4" width="2.9" height="14.4" rx="0.6" fill="url(#gPlus)"/>
<ellipse cx="158.90" cy="321.50" rx="11.00" ry="3.00" fill="url(#gShadow)"/><polygon points="146.90,303.20 155.90,301.00 168.80,303.40 160.50,307.30" fill="url(#gTop)" stroke="url(#gTop)" stroke-width="0.5" stroke-linejoin="round"/><polygon points="146.90,303.20 160.50,307.30 160.50,323.00 148.10,317.90" fill="url(#gFront)" stroke="url(#gFront)" stroke-width="0.5" stroke-linejoin="round"/><polygon points="160.50,307.30 168.80,303.40 167.90,317.00 160.50,323.00" fill="url(#gRight)" stroke="url(#gRight)" stroke-width="0.5" stroke-linejoin="round"/>
<rect x="149.1" y="309.7" width="17.6" height="4.3" rx="0.6" fill="url(#gMinus)"/>
<g fill="#a9a9a9">
<rect x="71.2" y="342" width="10.6" height="3.7"/><rect x="83.2" y="342.3" width="4.6" height="3.4"/>
<rect x="71.2" y="346.9" width="8.8" height="7.3"/><rect x="82.2" y="347.8" width="7.5" height="3.4"/>
<rect x="82" y="353" width="5.1" height="5.5"/></g>
<g fill="#ffffff" opacity="0.25"><rect x="71.2" y="342" width="10.6" height="1.5"/><rect x="71.2" y="346.9" width="8.8" height="2.5"/></g>
<path d="M68.5 343.5 L68.5 353" stroke="#222" stroke-width="1.8"/>
<polygon points="68.5,342 66.3,345.6 70.7,345.6" fill="#222"/><polygon points="68.5,354.3 66.3,350.8 70.7,350.8" fill="#222"/>
<path d="M71.3 357.2 L78 357.2" stroke="#222" stroke-width="1.6"/><polygon points="80.2,357.2 76.8,355 76.8,359.4" fill="#222"/>
<ellipse cx="65.30" cy="643.50" rx="11" ry="1.3" fill="url(#gShadow)"/><path d="M62.08 625.32 L62.16 625.71 L63.47 625.69 L63.47 626.71 L62.16 626.69 L62.08 627.08 L61.96 627.46 L63.10 628.10 L62.59 628.98 L61.47 628.30 L61.20 628.60 L60.90 628.87 L61.58 629.99 L60.70 630.50 L60.06 629.36 L59.68 629.48 L59.29 629.56 L59.31 630.87 L58.29 630.87 L58.31 629.56 L57.92 629.48 L57.54 629.36 L56.90 630.50 L56.02 629.99 L56.70 628.87 L56.40 628.60 L56.13 628.30 L55.01 628.98 L54.50 628.10 L55.64 627.46 L55.52 627.08 L55.44 626.69 L54.13 626.71 L54.13 625.69 L55.44 625.71 L55.52 625.32 L55.64 624.94 L54.50 624.30 L55.01 623.42 L56.13 624.10 L56.40 623.80 L56.70 623.53 L56.02 622.41 L56.90 621.90 L57.54 623.04 L57.92 622.92 L58.31 622.84 L58.29 621.53 L59.31 621.53 L59.29 622.84 L59.68 622.92 L60.06 623.04 L60.70 621.90 L61.58 622.41 L60.90 623.53 L61.20 623.80 L61.47 624.10 L62.59 623.42 L63.10 624.30 L61.96 624.94 Z M60.00 626.20 A1.20 1.20 0 1 0 57.60 626.20 A1.20 1.20 0 1 0 60.00 626.20 Z" fill="#8e8e8e" fill-rule="evenodd"/><path d="M73.26 629.78 L73.30 630.26 L74.90 630.40 L74.78 631.59 L73.18 631.42 L73.05 631.87 L72.86 632.32 L74.21 633.19 L73.55 634.19 L72.22 633.29 L71.89 633.63 L71.52 633.94 L72.31 635.34 L71.26 635.92 L70.50 634.50 L70.04 634.65 L69.57 634.75 L69.62 636.36 L68.43 636.38 L68.41 634.77 L67.94 634.69 L67.48 634.56 L66.77 636.01 L65.70 635.48 L66.43 634.04 L66.05 633.75 L65.70 633.42 L64.41 634.38 L63.71 633.41 L65.02 632.48 L64.82 632.05 L64.66 631.59 L63.07 631.83 L62.91 630.65 L64.50 630.44 L64.52 629.96 L64.60 629.49 L63.07 628.96 L63.47 627.84 L64.99 628.39 L65.23 627.98 L65.51 627.59 L64.41 626.42 L65.29 625.61 L66.37 626.80 L66.77 626.55 L67.21 626.34 L66.77 624.79 L67.93 624.48 L68.33 626.04 L68.81 626.00 L69.29 626.02 L69.63 624.44 L70.79 624.71 L70.42 626.27 L70.86 626.46 L71.28 626.70 L72.31 625.46 L73.22 626.24 L72.17 627.45 L72.47 627.83 L72.73 628.23 L74.21 627.61 L74.66 628.72 L73.16 629.31 Z M70.50 630.40 A1.60 1.60 0 1 0 67.30 630.40 A1.60 1.60 0 1 0 70.50 630.40 Z" fill="#8e8e8e" fill-rule="evenodd"/><path d="M65.69 638.73 L65.70 639.13 L66.79 639.34 L66.59 640.31 L65.50 640.08 L65.34 640.45 L65.13 640.79 L65.93 641.55 L65.25 642.26 L64.46 641.48 L64.12 641.70 L63.77 641.87 L64.03 642.95 L63.06 643.17 L62.82 642.09 L62.42 642.09 L62.03 642.05 L61.66 643.09 L60.73 642.76 L61.11 641.72 L60.78 641.51 L60.47 641.25 L59.60 641.94 L59.00 641.16 L59.88 640.49 L59.71 640.12 L59.59 639.74 L58.49 639.85 L58.40 638.86 L59.51 638.78 L59.56 638.38 L59.67 638.00 L58.68 637.49 L59.14 636.62 L60.12 637.14 L60.38 636.84 L60.67 636.57 L60.12 635.61 L60.98 635.13 L61.52 636.10 L61.90 635.98 L62.29 635.92 L62.35 634.81 L63.33 634.86 L63.26 635.97 L63.64 636.08 L64.01 636.24 L64.65 635.34 L65.45 635.92 L64.79 636.81 L65.06 637.11 L65.28 637.44 L66.31 637.03 L66.67 637.95 L65.63 638.34 Z M63.75 639.00 A1.15 1.15 0 1 0 61.45 639.00 A1.15 1.15 0 1 0 63.75 639.00 Z" fill="#8e8e8e" fill-rule="evenodd"/>
<rect x="57.4" y="632.2" width="15.6" height="2.7" rx="0.5" fill="url(#gPlus)"/>
<rect x="63.6" y="627.1" width="3" height="14.3" rx="0.5" fill="url(#gPlus)"/>
<ellipse cx="162.20" cy="643.50" rx="11" ry="1.3" fill="url(#gShadow)"/><path d="M158.98 625.32 L159.06 625.71 L160.37 625.69 L160.37 626.71 L159.06 626.69 L158.98 627.08 L158.86 627.46 L160.00 628.10 L159.49 628.98 L158.37 628.30 L158.10 628.60 L157.80 628.87 L158.48 629.99 L157.60 630.50 L156.96 629.36 L156.58 629.48 L156.19 629.56 L156.21 630.87 L155.19 630.87 L155.21 629.56 L154.82 629.48 L154.44 629.36 L153.80 630.50 L152.92 629.99 L153.60 628.87 L153.30 628.60 L153.03 628.30 L151.91 628.98 L151.40 628.10 L152.54 627.46 L152.42 627.08 L152.34 626.69 L151.03 626.71 L151.03 625.69 L152.34 625.71 L152.42 625.32 L152.54 624.94 L151.40 624.30 L151.91 623.42 L153.03 624.10 L153.30 623.80 L153.60 623.53 L152.92 622.41 L153.80 621.90 L154.44 623.04 L154.82 622.92 L155.21 622.84 L155.19 621.53 L156.21 621.53 L156.19 622.84 L156.58 622.92 L156.96 623.04 L157.60 621.90 L158.48 622.41 L157.80 623.53 L158.10 623.80 L158.37 624.10 L159.49 623.42 L160.00 624.30 L158.86 624.94 Z M156.90 626.20 A1.20 1.20 0 1 0 154.50 626.20 A1.20 1.20 0 1 0 156.90 626.20 Z" fill="#8e8e8e" fill-rule="evenodd"/><path d="M170.16 629.78 L170.20 630.26 L171.80 630.40 L171.68 631.59 L170.08 631.42 L169.95 631.87 L169.76 632.32 L171.11 633.19 L170.45 634.19 L169.12 633.29 L168.79 633.63 L168.42 633.94 L169.21 635.34 L168.16 635.92 L167.40 634.50 L166.94 634.65 L166.47 634.75 L166.52 636.36 L165.33 636.38 L165.31 634.77 L164.84 634.69 L164.38 634.56 L163.67 636.01 L162.60 635.48 L163.33 634.04 L162.95 633.75 L162.60 633.42 L161.31 634.38 L160.61 633.41 L161.92 632.48 L161.72 632.05 L161.56 631.59 L159.97 631.83 L159.81 630.65 L161.40 630.44 L161.42 629.96 L161.50 629.49 L159.97 628.96 L160.37 627.84 L161.89 628.39 L162.13 627.98 L162.41 627.59 L161.31 626.42 L162.19 625.61 L163.27 626.80 L163.67 626.55 L164.11 626.34 L163.67 624.79 L164.83 624.48 L165.23 626.04 L165.71 626.00 L166.19 626.02 L166.53 624.44 L167.69 624.71 L167.32 626.27 L167.76 626.46 L168.18 626.70 L169.21 625.46 L170.12 626.24 L169.07 627.45 L169.37 627.83 L169.63 628.23 L171.11 627.61 L171.56 628.72 L170.06 629.31 Z M167.40 630.40 A1.60 1.60 0 1 0 164.20 630.40 A1.60 1.60 0 1 0 167.40 630.40 Z" fill="#8e8e8e" fill-rule="evenodd"/><path d="M162.59 638.73 L162.60 639.13 L163.69 639.34 L163.49 640.31 L162.40 640.08 L162.24 640.45 L162.03 640.79 L162.83 641.55 L162.15 642.26 L161.36 641.48 L161.02 641.70 L160.67 641.87 L160.93 642.95 L159.96 643.17 L159.72 642.09 L159.32 642.09 L158.93 642.05 L158.56 643.09 L157.63 642.76 L158.01 641.72 L157.68 641.51 L157.37 641.25 L156.50 641.94 L155.90 641.16 L156.78 640.49 L156.61 640.12 L156.49 639.74 L155.39 639.85 L155.30 638.86 L156.41 638.78 L156.46 638.38 L156.57 638.00 L155.58 637.49 L156.04 636.62 L157.02 637.14 L157.28 636.84 L157.57 636.57 L157.02 635.61 L157.88 635.13 L158.42 636.10 L158.80 635.98 L159.19 635.92 L159.25 634.81 L160.23 634.86 L160.16 635.97 L160.54 636.08 L160.91 636.24 L161.55 635.34 L162.35 635.92 L161.69 636.81 L161.96 637.11 L162.18 637.44 L163.21 637.03 L163.57 637.95 L162.53 638.34 Z M160.65 639.00 A1.15 1.15 0 1 0 158.35 639.00 A1.15 1.15 0 1 0 160.65 639.00 Z" fill="#8e8e8e" fill-rule="evenodd"/>
<rect x="153" y="631.9" width="17.8" height="4" rx="0.6" fill="url(#gMinus)"/>
<ellipse cx="76.20" cy="681.70" rx="11" ry="1.3" fill="url(#gShadow)"/><path d="M72.98 663.52 L73.06 663.91 L74.37 663.89 L74.37 664.91 L73.06 664.89 L72.98 665.28 L72.86 665.66 L74.00 666.30 L73.49 667.18 L72.37 666.50 L72.10 666.80 L71.80 667.07 L72.48 668.19 L71.60 668.70 L70.96 667.56 L70.58 667.68 L70.19 667.76 L70.21 669.07 L69.19 669.07 L69.21 667.76 L68.82 667.68 L68.44 667.56 L67.80 668.70 L66.92 668.19 L67.60 667.07 L67.30 666.80 L67.03 666.50 L65.91 667.18 L65.40 666.30 L66.54 665.66 L66.42 665.28 L66.34 664.89 L65.03 664.91 L65.03 663.89 L66.34 663.91 L66.42 663.52 L66.54 663.14 L65.40 662.50 L65.91 661.62 L67.03 662.30 L67.30 662.00 L67.60 661.73 L66.92 660.61 L67.80 660.10 L68.44 661.24 L68.82 661.12 L69.21 661.04 L69.19 659.73 L70.21 659.73 L70.19 661.04 L70.58 661.12 L70.96 661.24 L71.60 660.10 L72.48 660.61 L71.80 661.73 L72.10 662.00 L72.37 662.30 L73.49 661.62 L74.00 662.50 L72.86 663.14 Z M70.90 664.40 A1.20 1.20 0 1 0 68.50 664.40 A1.20 1.20 0 1 0 70.90 664.40 Z" fill="#8e8e8e" fill-rule="evenodd"/><path d="M84.16 667.98 L84.20 668.46 L85.80 668.60 L85.68 669.79 L84.08 669.62 L83.95 670.07 L83.76 670.52 L85.11 671.39 L84.45 672.39 L83.12 671.49 L82.79 671.83 L82.42 672.14 L83.21 673.54 L82.16 674.12 L81.40 672.70 L80.94 672.85 L80.47 672.95 L80.52 674.56 L79.33 674.58 L79.31 672.97 L78.84 672.89 L78.38 672.76 L77.67 674.21 L76.60 673.68 L77.33 672.24 L76.95 671.95 L76.60 671.62 L75.31 672.58 L74.61 671.61 L75.92 670.68 L75.72 670.25 L75.56 669.79 L73.97 670.03 L73.81 668.85 L75.40 668.64 L75.42 668.16 L75.50 667.69 L73.97 667.16 L74.37 666.04 L75.89 666.59 L76.13 666.18 L76.41 665.79 L75.31 664.62 L76.19 663.81 L77.27 665.00 L77.67 664.75 L78.11 664.54 L77.67 662.99 L78.83 662.68 L79.23 664.24 L79.71 664.20 L80.19 664.22 L80.53 662.64 L81.69 662.91 L81.32 664.47 L81.76 664.66 L82.18 664.90 L83.21 663.66 L84.12 664.44 L83.07 665.65 L83.37 666.03 L83.63 666.43 L85.11 665.81 L85.56 666.92 L84.06 667.51 Z M81.40 668.60 A1.60 1.60 0 1 0 78.20 668.60 A1.60 1.60 0 1 0 81.40 668.60 Z" fill="#8e8e8e" fill-rule="evenodd"/><path d="M76.59 676.93 L76.60 677.33 L77.69 677.54 L77.49 678.51 L76.40 678.28 L76.24 678.65 L76.03 678.99 L76.83 679.75 L76.15 680.46 L75.36 679.68 L75.02 679.90 L74.67 680.07 L74.93 681.15 L73.96 681.37 L73.72 680.29 L73.32 680.29 L72.93 680.25 L72.56 681.29 L71.63 680.96 L72.01 679.92 L71.68 679.71 L71.37 679.45 L70.50 680.14 L69.90 679.36 L70.78 678.69 L70.61 678.32 L70.49 677.94 L69.39 678.05 L69.30 677.06 L70.41 676.98 L70.46 676.58 L70.57 676.20 L69.58 675.69 L70.04 674.82 L71.02 675.34 L71.28 675.04 L71.57 674.77 L71.02 673.81 L71.88 673.33 L72.42 674.30 L72.80 674.18 L73.19 674.12 L73.25 673.01 L74.23 673.06 L74.16 674.17 L74.54 674.28 L74.91 674.44 L75.55 673.54 L76.35 674.12 L75.69 675.01 L75.96 675.31 L76.18 675.64 L77.21 675.23 L77.57 676.15 L76.53 676.54 Z M74.65 677.20 A1.15 1.15 0 1 0 72.35 677.20 A1.15 1.15 0 1 0 74.65 677.20 Z" fill="#8e8e8e" fill-rule="evenodd"/>
<ellipse cx="86" cy="724" rx="11" ry="1.6" fill="url(#gShadow)"/>
<polygon points="77.4,703 87.8,703 92.1,706.8 92.1,723 77.4,723" fill="#ececec" stroke="#dcdcdc" stroke-width="0.5"/>
<polygon points="87.8,703 92.1,706.8 87.8,706.8" fill="#8c8c8c"/>
<g stroke="#b4b4b4" stroke-width="1"><path d="M78.5 706 h2 M82 706 h2 M85 707 h1.5 M78.5 709.5 h2 M82.5 709.5 h1.5 M85.5 709.5 h2 M89 709.5 h1.5 M78.5 711.8 h1.5 M81.5 711.8 h7 M78.5 713.8 h1.5 M81.5 713.8 h5 M78.5 716 h1.5 M81.5 716 h4 M78.5 718 h1.5 M78.5 720.5 h1.5 M81.5 720.5 h2"/></g>
<polygon points="82.8,717.9 85.8,714.8 88.8,718.3 94.6,710.8 97.2,713.6 89,724.3" fill="url(#gCheck)"/>
<rect x="1197.2" y="765.2" width="1.2" height="1.2" fill="#fff"/><rect x="1198" y="766" width="1.3" height="1.3" fill="#7a7a7a"/>
<rect x="1194.2" y="768.2" width="1.2" height="1.2" fill="#fff"/><rect x="1195" y="769" width="1.3" height="1.3" fill="#7a7a7a"/>
<rect x="1197.2" y="768.2" width="1.2" height="1.2" fill="#fff"/><rect x="1198" y="769" width="1.3" height="1.3" fill="#7a7a7a"/>
<rect x="1191.2" y="771.2" width="1.2" height="1.2" fill="#fff"/><rect x="1192" y="772" width="1.3" height="1.3" fill="#7a7a7a"/>
<rect x="1194.2" y="771.2" width="1.2" height="1.2" fill="#fff"/><rect x="1195" y="772" width="1.3" height="1.3" fill="#7a7a7a"/>
<rect x="1197.2" y="771.2" width="1.2" height="1.2" fill="#fff"/><rect x="1198" y="772" width="1.3" height="1.3" fill="#7a7a7a"/>
<rect x="1171.7" y="27.7" width="1.7" height="1.7" fill="#fff"/><polygon points="1172.9,27 1172.9,28.8 1171.1,28.8" fill="#909090"/>
<rect x="1175.7" y="27.7" width="1.7" height="1.7" fill="#fff"/><polygon points="1176.9,27 1176.9,28.8 1175.1,28.8" fill="#909090"/>
<rect x="1179.7" y="27.7" width="1.7" height="1.7" fill="#fff"/><polygon points="1180.9,27 1180.9,28.8 1179.1,28.8" fill="#909090"/>
<rect x="1183.7" y="27.7" width="1.7" height="1.7" fill="#fff"/><polygon points="1184.9,27 1184.9,28.8 1183.1,28.8" fill="#909090"/>
<rect x="1187.7" y="27.7" width="1.7" height="1.7" fill="#fff"/><polygon points="1188.9,27 1188.9,28.8 1187.1,28.8" fill="#909090"/>
<rect x="1191.7" y="27.7" width="1.7" height="1.7" fill="#fff"/><polygon points="1192.9,27 1192.9,28.8 1191.1,28.8" fill="#909090"/>
<rect x="1195.7" y="27.7" width="1.7" height="1.7" fill="#fff"/><polygon points="1196.9,27 1196.9,28.8 1195.1,28.8" fill="#909090"/>
<ellipse cx="1185.00" cy="57.50" rx="11.00" ry="3.00" fill="url(#gShadow)"/><polygon points="1173.00,39.20 1182.00,37.00 1194.90,39.40 1186.60,43.30" fill="url(#gBlueT)" stroke="url(#gBlueT)" stroke-width="0.5" stroke-linejoin="round"/><polygon points="1173.00,39.20 1186.60,43.30 1186.60,59.00 1174.20,53.90" fill="url(#gBlueF)" stroke="url(#gBlueF)" stroke-width="0.5" stroke-linejoin="round"/><polygon points="1186.60,43.30 1194.90,39.40 1194.00,53.00 1186.60,59.00" fill="url(#gBlueR)" stroke="url(#gBlueR)" stroke-width="0.5" stroke-linejoin="round"/>
<ellipse cx="1185.00" cy="87.50" rx="11.00" ry="3.00" fill="url(#gShadow)"/><polygon points="1173.00,69.20 1182.00,67.00 1194.90,69.40 1186.60,73.30" fill="url(#gBlueT)" stroke="url(#gBlueT)" stroke-width="0.5" stroke-linejoin="round"/><polygon points="1173.00,69.20 1186.60,73.30 1186.60,89.00 1174.20,83.90" fill="url(#gFront)" stroke="url(#gFront)" stroke-width="0.5" stroke-linejoin="round"/><polygon points="1186.60,73.30 1194.90,69.40 1194.00,83.00 1186.60,89.00" fill="url(#gRight)" stroke="url(#gRight)" stroke-width="0.5" stroke-linejoin="round"/>
<ellipse cx="1185.00" cy="117.50" rx="11.00" ry="3.00" fill="url(#gShadow)"/><polygon points="1173.00,99.20 1182.00,97.00 1194.90,99.40 1186.60,103.30" fill="#9c9c9c" stroke="#9c9c9c" stroke-width="0.5" stroke-linejoin="round"/><polygon points="1173.00,99.20 1186.60,103.30 1186.60,119.00 1174.20,113.90" fill="url(#gBlueF)" stroke="url(#gBlueF)" stroke-width="0.5" stroke-linejoin="round"/><polygon points="1186.60,103.30 1194.90,99.40 1194.00,113.00 1186.60,119.00" fill="url(#gRight)" stroke="url(#gRight)" stroke-width="0.5" stroke-linejoin="round"/>
<ellipse cx="1185.00" cy="147.50" rx="11.00" ry="3.00" fill="url(#gShadow)"/><polygon points="1173.00,129.20 1182.00,127.00 1194.90,129.40 1186.60,133.30" fill="url(#gTop)" stroke="url(#gTop)" stroke-width="0.5" stroke-linejoin="round"/><polygon points="1173.00,129.20 1186.60,133.30 1186.60,149.00 1174.20,143.90" fill="url(#gFront)" stroke="url(#gFront)" stroke-width="0.5" stroke-linejoin="round"/><polygon points="1186.60,133.30 1194.90,129.40 1194.00,143.00 1186.60,149.00" fill="url(#gBlueR)" stroke="url(#gBlueR)" stroke-width="0.5" stroke-linejoin="round"/>
<rect x="1172" y="155" width="25" height="1" fill="#c8c8c8"/>
<rect x="1172" y="311" width="25" height="1" fill="#c8c8c8"/>
<rect x="1172" y="347" width="25" height="1" fill="#c8c8c8"/>
<rect x="1169.8" y="160.5" width="29.6" height="27" rx="3.5" fill="url(#gSel)" stroke="#5c5c5c" stroke-width="1.5"/>
<rect x="1169.8" y="280.5" width="29.6" height="27" rx="3.5" fill="url(#gSel)" stroke="#5c5c5c" stroke-width="1.5"/>
<ellipse cx="1185.82" cy="183.48" rx="10.56" ry="2.88" fill="url(#gShadow)"/><polygon points="1174.30,165.91 1182.94,163.80 1195.32,166.10 1187.36,169.85" fill="url(#gTop)" stroke="url(#gTop)" stroke-width="0.5" stroke-linejoin="round"/><polygon points="1174.30,165.91 1187.36,169.85 1187.36,184.92 1175.45,180.02" fill="url(#gFront)" stroke="url(#gFront)" stroke-width="0.5" stroke-linejoin="round"/><polygon points="1187.36,169.85 1195.32,166.10 1194.46,179.16 1187.36,184.92" fill="url(#gRight)" stroke="url(#gRight)" stroke-width="0.5" stroke-linejoin="round"/>
<path d="M1173.4 195.4 L1183.3 193.2 M1183.3 193.2 L1194.6 195.4 M1194.6 195.4 L1186.3 199.3 M1186.3 199.3 L1173.4 195.4 M1174.7 209 L1183.3 205.3 M1183.3 205.3 L1193.5 208.3 M1193.5 208.3 L1186.2 214.4 M1186.2 214.4 L1174.7 209 M1173.4 195.4 L1174.7 209 M1183.3 193.2 L1183.3 205.3 M1194.6 195.4 L1193.5 208.3 M1186.3 199.3 L1186.2 214.4" stroke="#464646" stroke-width="0.8" fill="none" stroke-linecap="round"/>
<circle cx="1173.9" cy="227.2" r="1.25" fill="#4a5a88"/>
<circle cx="1182.9" cy="223.9" r="1.25" fill="#4a5a88"/>
<circle cx="1194" cy="226.6" r="1.25" fill="#4a5a88"/>
<circle cx="1186.5" cy="230.4" r="1.25" fill="#4a5a88"/>
<circle cx="1182.9" cy="235.4" r="1.25" fill="#4a5a88"/>
<circle cx="1174.7" cy="239.2" r="1.25" fill="#4a5a88"/>
<circle cx="1193" cy="238.1" r="1.25" fill="#4a5a88"/>
<circle cx="1185.4" cy="243.3" r="1.25" fill="#4a5a88"/>
<polygon points="1174.7,267 1180.4,273 1193.3,269.5" fill="#8a8a8a"/>
<g stroke="#f0303e" stroke-width="1.5"><path d="M1174.7 267 L1176 256 M1180.4 273 L1180.8 260.5 M1193.3 269.5 L1191.6 256.5"/></g>
<g fill="#f0303e"><polygon points="1176.3,252.6 1174,258.2 1178,258"/><polygon points="1180.9,257 1178.9,262.4 1182.8,262.4"/><polygon points="1191.2,252.6 1189.6,258.6 1193.6,258.2"/></g>
<g fill="#6b6b6b"><circle cx="1187.9" cy="290.3" r="6.8"/><polygon points="1181.3,290.5 1179.3,297.3 1184.8,300.6 1193.6,294.8"/></g>
<path d="M1184.2 287.6 Q1185.8 285.3 1188.4 285.6" stroke="#f2f2f2" stroke-width="1.3" fill="none" stroke-linecap="round"/>
<g stroke="#6b6b6b" stroke-width="1.35"><path d="M1178.3 299.4 L1183.6 302.3 M1177.1 301.5 L1182.4 304.3 M1176.2 303.6 L1180.6 306"/></g>
<polygon points="1173.05,321.4 1181.8,319.2 1187.9,320.1 1178.6,323.2" fill="#bdbdbd"/>
<polygon points="1173.05,321.4 1178.6,323.2 1178.6,337.6 1174.3,336.1" fill="#c4c4c4"/>
<polygon points="1178.6,323.2 1187.9,320.1 1187.9,332.5 1178.6,337.7" fill="#b04c4c"/>
<polygon points="1178.6,323.2 1182.5,322 1182.5,335.5 1178.6,337.7" fill="#7a2222" opacity="0.5"/>
<g stroke="#505050" stroke-width="0.8" fill="none"><path d="M1178.6 323.2 L1186.5 325.5 L1194.6 321.4 L1187.9 320.1 M1186.5 325.5 L1186.5 340.4 L1194.8 334.7 L1194.6 321.4 M1186.5 340.4 L1178.6 337.7 M1187.9 332.5 L1194.8 334.7"/></g>
<path d="M1182.24 357.14 L1183.29 357.01 L1183.56 354.50 L1186.03 354.72 L1185.86 357.24 L1186.88 357.54 L1187.85 357.96 L1189.34 355.92 L1191.37 357.35 L1189.97 359.44 L1190.69 360.21 L1191.33 361.07 L1193.64 360.04 L1194.69 362.29 L1192.42 363.41 L1192.66 364.44 L1192.79 365.49 L1195.30 365.76 L1195.08 368.23 L1192.56 368.06 L1192.26 369.08 L1191.84 370.05 L1193.88 371.54 L1192.45 373.57 L1190.36 372.17 L1189.59 372.89 L1188.73 373.53 L1189.76 375.84 L1187.51 376.89 L1186.39 374.62 L1185.36 374.86 L1184.31 374.99 L1184.04 377.50 L1181.57 377.28 L1181.74 374.76 L1180.72 374.46 L1179.75 374.04 L1178.26 376.08 L1176.23 374.65 L1177.63 372.56 L1176.91 371.79 L1176.27 370.93 L1173.96 371.96 L1172.91 369.71 L1175.18 368.59 L1174.94 367.56 L1174.81 366.51 L1172.30 366.24 L1172.52 363.77 L1175.04 363.94 L1175.34 362.92 L1175.76 361.95 L1173.72 360.46 L1175.15 358.43 L1177.24 359.83 L1178.01 359.11 L1178.87 358.47 L1177.84 356.16 L1180.09 355.11 L1181.21 357.38 Z M1189.90 366.00 A6.10 6.10 0 1 0 1177.70 366.00 A6.10 6.10 0 1 0 1189.90 366.00 Z" fill="#6a6a6a" fill-rule="evenodd"/>
<polygon points="1173.2,387.4 1178.3,386.1 1194.8,388.3 1193,389.2" fill="#a8a8a8"/>
<polygon points="1173.2,387.4 1193,389.2 1193,392.6 1180,392 1180,402.5 1174,400.5" fill="#c2c2c2"/>
<polygon points="1193,389.2 1194.8,388.3 1194.6,391.6 1193,392.6" fill="#8a8a8a"/>
<polygon points="1180,392 1182,391.8 1182,401.3 1180,402.5" fill="#8e8e8e"/>
<rect x="1183.8" y="392" width="3" height="12.6" fill="#7ca2c0"/><rect x="1186.6" y="392" width="1.2" height="12" fill="#5e7f9a"/>
<rect x="1188.8" y="393" width="3" height="12.9" fill="#7ca2c0"/><rect x="1191.6" y="393" width="1.2" height="12.3" fill="#5e7f9a"/></svg>
</body></html>
